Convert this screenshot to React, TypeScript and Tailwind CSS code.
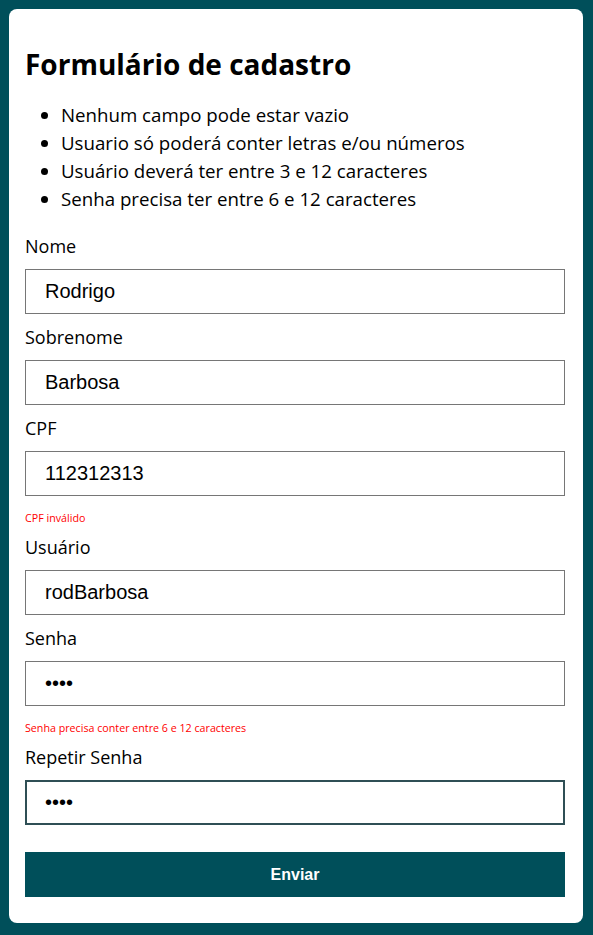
import { useState } from "react"

const regras = [
  "Nenhum campo pode estar vazio",
  "Usuario só poderá conter letras e/ou números",
  "Usuário deverá ter entre 3 e 12 caracteres",
  "Senha precisa ter entre 6 e 12 caracteres",
]

type Campo = { label: string; value: string; type?: string; erro?: string; focus?: boolean }

const campos: Campo[] = [
  { label: "Nome", value: "Rodrigo" },
  { label: "Sobrenome", value: "Barbosa" },
  { label: "CPF", value: "112312313", erro: "CPF inválido" },
  { label: "Usuário", value: "rodBarbosa" },
  { label: "Senha", value: "1234", type: "password", erro: "Senha precisa conter entre 6 e 12 caracteres" },
  { label: "Repetir Senha", value: "1234", type: "password", focus: true },
]

function Field({ campo }: { campo: Campo }) {
  const [value, setValue] = useState(campo.value)
  return <div className="flex flex-col">
    <label className="h-[24px] leading-[24px] text-[18px] text-black mb-[11px]">{campo.label}</label>
    <input
      type={campo.type || "text"}
      value={value}
      onChange={e => setValue(e.target.value)}
      className={`h-[45px] w-full text-[20px] text-black bg-white font-['Liberation_Sans',Arial,sans-serif] outline-none ${campo.focus ? "border-2 border-[#2f4f55] px-[18px]" : "border border-[#767676] px-[19px]"}`}
    />
    {campo.erro
      ? <p className="pt-[15px] pb-[9px] leading-[15px] text-[10.7px] text-[#ff0000]">{campo.erro}</p>
      : <div className="h-[11px]" />}
  </div>
}

export default function App() {
  return <div className="min-h-[935px] bg-[#004f5a] pt-[9px] px-[9px] pb-[12px] font-['Open_Sans',sans-serif]">
    <div className="bg-white rounded-[8px] pl-[16px] pr-[18px] pt-[17px] pb-[26px] w-[574px]">
      <h1 className="text-[28px] font-bold leading-[38px] mt-[19px] text-black">Formulário de cadastro</h1>

      <ul className="list-disc pl-[36px] mt-[18px] mb-[21px]">
        {regras.map(r => <li key={r} className="text-[18.7px] leading-[28px] text-black">{r}</li>)}
      </ul>

      <form onSubmit={e => e.preventDefault()} className="flex flex-col">
        {campos.map(c => <Field key={c.label} campo={c} />)}
        <button className="mt-[16px] h-[45px] w-full bg-[#004f5a] text-white font-bold text-[16px] font-['Liberation_Sans',Arial,sans-serif]">Enviar</button>
      </form>
    </div>
  </div>
}
